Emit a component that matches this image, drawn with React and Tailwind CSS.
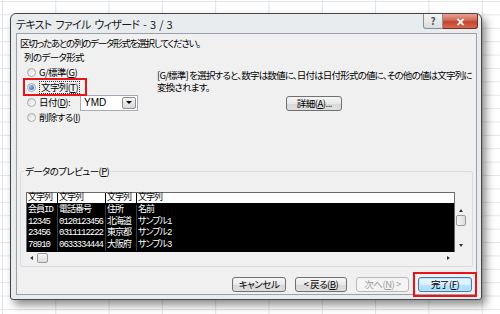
import React from 'react';

const jp = "font-['Noto_Sans_CJK_JP',sans-serif] [font-feature-settings:'palt']";
const mono = "font-['Liberation_Mono','Noto_Sans_CJK_JP',monospace]";

const rows = [
  ['会員ID', '電話番号', '住所', '名前'],
  ['12345', '0120123456', '北海道', 'サンプル1'],
  ['23456', '0311112222', '東京都', 'サンプル2'],
  ['78910', '0633334444', '大阪府', 'サンプル3'],
];
const colWidths = ['w-[30px]', 'w-[48px]', 'w-[31px]', 'flex-1'];

function Radio({ checked }) {
  return (
    <span className="flex h-[9px] w-[9px] shrink-0 items-center justify-center rounded-full border border-[#a9a9a9] bg-[linear-gradient(135deg,#dcdcdc,#ffffff)]">
      {checked && <span className="h-[5px] w-[5px] rounded-full bg-[radial-gradient(circle_at_35%_35%,#8fc0f5,#1b58b0)]" />}
    </span>
  );
}

function Button({ children, width, disabled, primary }) {
  let cls = 'border-[#707070] text-black bg-[linear-gradient(#f6f6f6,#e8e8e8_50%,#d8d8d8_51%,#dedede)]';
  if (disabled) cls = 'border-[#b5b9bc] text-[#9c9c9c] bg-[#f4f4f4]';
  if (primary) cls = 'border-[#3c7fb1] text-black bg-[linear-gradient(#eaf6fd,#d9f0fc_50%,#bee6fd_51%,#a7d9f5)] shadow-[inset_0_0_0_1px_#c2e4f6]';
  return (
    <div className={`relative flex h-[15px] items-center justify-center rounded-[3px] border text-[9.5px] tracking-[-0.5px] leading-none ${width} ${cls}`}>
      {children}
    </div>
  );
}

export default function App() {
  return (
    <div className={`relative h-[314px] w-[500px] overflow-hidden bg-white bg-[linear-gradient(to_right,#dfe2e6_1px,transparent_1px),linear-gradient(to_bottom,#e3e6e9_1px,transparent_1px)] [background-size:53.3px_13.4px] [background-position:2px_1px] pl-[10px] pt-[13px] text-black ${jp}`}>
      {/* window */}
      <div className="flex h-[287px] w-[472px] flex-col rounded-t-[6px] rounded-b-[3px] border border-[#474747] bg-[#e9ecef] shadow-[4px_5px_9px_rgba(0,0,0,0.45)]">
        {/* title bar */}
        <div className="flex h-[19px] shrink-0 items-start">
          <span className="mt-[3px] pl-[5px] text-[11px] tracking-[-0.7px] [word-spacing:2px] leading-[14px] text-[#1a1a1a] whitespace-nowrap">テキスト ファイル ウィザード - 3 / 3</span>
          <div className="ml-auto mr-[3px] flex">
            <div className="flex h-[15px] w-[20px] items-center justify-center rounded-bl-[3px] border border-t-0 border-[#8c9095] bg-[linear-gradient(#f4f4f4,#dadde0)] text-[10px] font-bold leading-none text-[#555]">?</div>
            <div className="flex h-[15px] w-[35px] items-center justify-center rounded-br-[3px] border border-l-0 border-t-0 border-[#7a2a24] bg-[linear-gradient(#e8a291,#d06a58_45%,#c3432f_55%,#d46a4f)] text-[11px] font-bold leading-none text-white">✕</div>
          </div>
        </div>

        {/* client */}
        <div className="mb-[4px] ml-[5px] mr-[4px] flex flex-1 flex-col border border-[#9aa1a8] bg-[#f0f0f0] text-[9.5px] tracking-[-0.6px]">
          <div className="mt-[2px] pl-[3px] leading-[14px] tracking-[-1.2px] whitespace-nowrap">区切ったあとの列のデータ形式を選択してください。</div>

          {/* column data format */}
          <div className="flex pl-[7px]">
            <div className="w-[133px] shrink-0">
              <div className="leading-[14px]">列のデータ形式</div>
              <div className="mt-[1px] flex flex-col pl-[3px]">
                <div className="flex h-[15px] items-center gap-[3px]">
                  <Radio />
                  <span>G/標準(<u>G</u>)</span>
                </div>
                <div className="relative flex h-[15px] items-center gap-[3px]">
                  <Radio checked />
                  <span className="border border-dotted border-[#333] px-[1px] leading-[11px]">文字列(<u>T</u>)</span>
                  <div className="absolute -left-[4px] -top-[2px] h-[18px] w-[64px] border-2 border-[#e8141b]" />
                </div>
                <div className="flex h-[15px] items-center gap-[3px]">
                  <Radio />
                  <span className="w-[38px]">日付(<u>D</u>):</span>
                  <div className="flex h-[16px] w-[58px] items-center border border-[#a5acb5] bg-white">
                    <span className="pl-[3px] font-['Liberation_Sans',sans-serif] text-[10px] tracking-normal">YMD</span>
                    <div className="ml-auto mr-[1px] flex h-[12px] w-[14px] items-center justify-center rounded-[2px] border border-[#8d8d8d] bg-[linear-gradient(#f5f5f5,#d9d9d9)]">
                      <span className="h-0 w-0 border-x-[3px] border-t-[3px] border-x-transparent border-t-black" />
                    </div>
                  </div>
                </div>
                <div className="flex h-[15px] items-center gap-[3px]">
                  <Radio />
                  <span>削除する(<u>I</u>)</span>
                </div>
              </div>
            </div>
            <div className="flex flex-col items-center pt-[19px]">
              <div className="self-start leading-[12px] tracking-[-0.8px] whitespace-nowrap">
                <div>[G/標準] を選択すると、数字は数値に、日付は日付形式の値に、その他の値は文字列に</div>
                <div>変換されます。</div>
              </div>
              <div className="mt-[3px]">
                <Button width="w-[56px]">詳細(<u>A</u>)...</Button>
              </div>
            </div>
          </div>

          {/* preview group */}
          <div className="ml-[3px] mr-[3px] mt-[46px] flex h-[96px] flex-col rounded-[2px] border border-[#d9dde1]">
            <div className="-mt-[8px] ml-[3px] w-fit bg-[#f0f0f0] px-[1px] leading-[14px]">データのプレビュー(<u>P</u>)</div>
            <div className="ml-[5px] mt-[14px] flex w-[441px] flex-col">
              <div className="flex">
                <div className="flex w-[429px] flex-col border border-b-0 border-[#6b6b6b]">
                  {/* header */}
                  <div className={`flex h-[11px] border-b border-black bg-white text-[9px] leading-[10px] tracking-[-1px] ${mono}`}>
                    {colWidths.map((w, i) => (
                      <div key={i} className={`${w} ${i > 0 ? 'border-l border-black' : ''} pl-[1px]`}>
                        <span className="border-b border-black">文字列</span>
                      </div>
                    ))}
                  </div>
                  {/* data */}
                  <div className={`flex h-[48px] flex-col bg-black pt-[1px] text-[9px] leading-[11.5px] tracking-[-1px] text-white ${mono}`}>
                    {rows.map((r, ri) => (
                      <div key={ri} className="flex">
                        {r.map((c, ci) => (
                          <div key={ci} className={`${colWidths[ci]} whitespace-nowrap ${ci > 0 ? 'border-l border-[#3a3a3a]' : ''} pl-[1px]`}>{c}</div>
                        ))}
                      </div>
                    ))}
                  </div>
                </div>
                {/* vertical scrollbar */}
                <div className="mt-[12px] flex h-[48px] w-[12px] flex-col items-center bg-[#f0f0f0]">
                  <span className="mt-[5px] h-0 w-0 border-x-[2.5px] border-b-[3px] border-x-transparent border-b-[#333]" />
                  <div className="mt-[3px] h-[11px] w-[10px] rounded-[2px] border border-[#9b9b9b] bg-[linear-gradient(to_right,#f6f6f6,#dcdcdc)]" />
                  <span className="mt-auto mb-[5px] h-0 w-0 border-x-[2.5px] border-t-[3px] border-x-transparent border-t-[#333]" />
                </div>
              </div>
              {/* horizontal scrollbar */}
              <div className="flex h-[11px] w-[429px] items-center bg-[#f0f0f0]">
                <span className="ml-[4px] h-0 w-0 border-y-[2.5px] border-r-[3px] border-y-transparent border-r-[#333]" />
                <div className="ml-[4px] h-[10px] w-[11px] rounded-[2px] border border-[#9b9b9b] bg-[linear-gradient(#f6f6f6,#dcdcdc)]" />
                <span className="ml-auto mr-[5px] h-0 w-0 border-y-[2.5px] border-l-[3px] border-y-transparent border-l-[#333]" />
              </div>
            </div>
          </div>

          {/* buttons */}
          <div className="mt-[10px] flex justify-end gap-[9px] pr-[4px]">
            <Button width="w-[54px]">キャンセル</Button>
            <Button width="w-[52px]">&lt; 戻る(<u>B</u>)</Button>
            <Button width="w-[53px]" disabled>次へ(<u>N</u>) &gt;</Button>
            <div className="relative">
              <Button width="w-[54px]" primary>完了(<u>F</u>)</Button>
              <div className="absolute -inset-[5px] border-2 border-[#e8141b]" />
            </div>
          </div>
        </div>
      </div>
    </div>
  );
}
